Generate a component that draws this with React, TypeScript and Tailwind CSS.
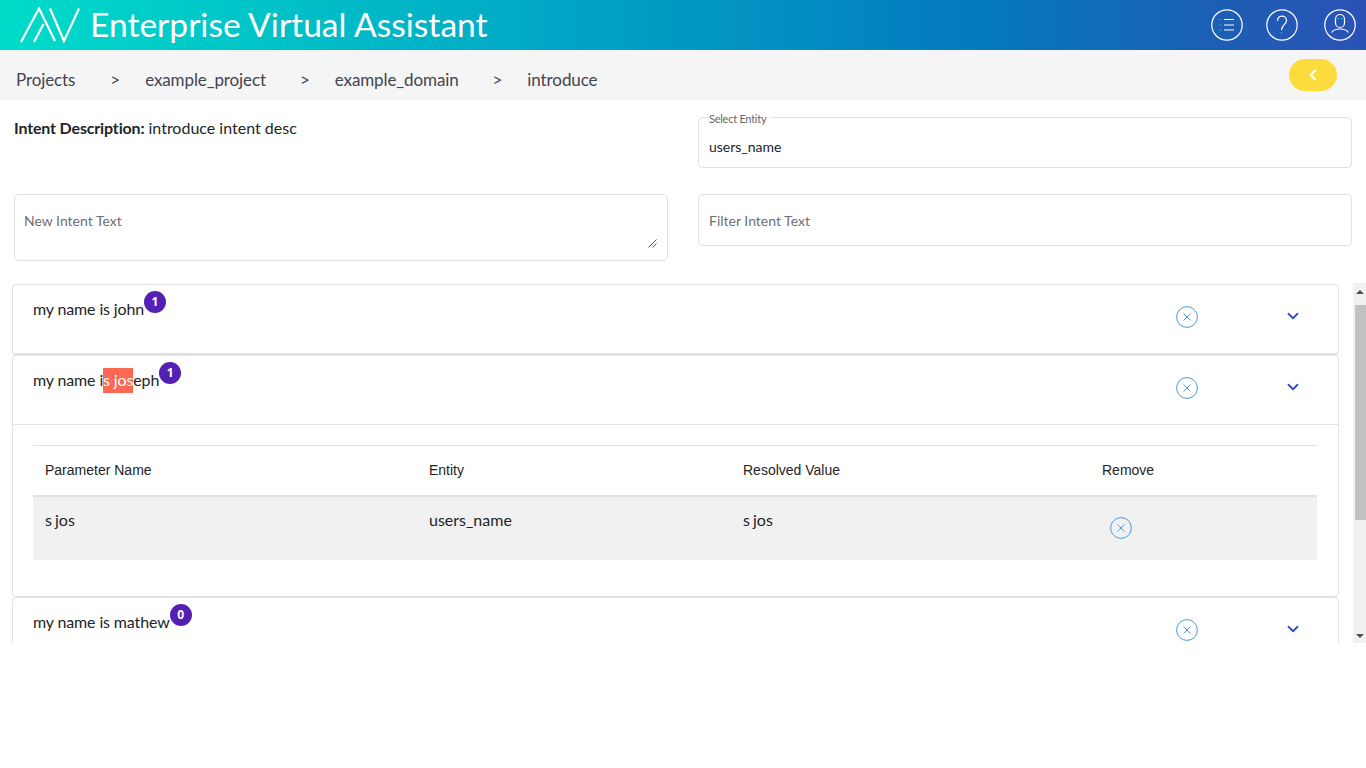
import { ChevronLeft, ChevronDown } from 'lucide-react';

// Logo mark, drawn from the header crop
function Logo() {
  return (
    <svg width="60" height="36" viewBox="0 0 60 36" fill="none" stroke="white" strokeWidth="2.2" className="shrink-0">
      <path d="M1 35 L19 1.5 L35 34" />
      <path d="M14 35 L23.5 17" />
      <path d="M30 1.5 L44 34 L59 1.5" />
    </svg>
  );
}

function CircleButton({ children }: { children: React.ReactNode }) {
  return (
    <svg width="32" height="32" viewBox="0 0 32 32" fill="none" stroke="white" strokeWidth="1.2">
      <circle cx="16" cy="16" r="15.2" />
      {children}
    </svg>
  );
}

function RemoveIcon() {
  return (
    <svg width="22" height="22" viewBox="0 0 22 22" fill="none" stroke="#4a9be0" strokeWidth="1">
      <circle cx="11" cy="11" r="10.4" />
      <path d="M7.5 7.5 L14.5 14.5 M14.5 7.5 L7.5 14.5" />
    </svg>
  );
}

function Badge({ value }: { value: number }) {
  return (
    <span className="-mt-[6px] flex h-[22px] w-[22px] items-center justify-center rounded-full bg-[#5420b4] text-xs font-bold tracking-normal text-white font-['Open_Sans',sans-serif]">
      {value}
    </span>
  );
}

function IntentHead({ children, badge }: { children: React.ReactNode; badge: number }) {
  return (
    <div className="flex h-[68px] shrink-0 pl-[20px]">
      <div className="mt-[12px] flex h-[25px] w-[1100px] items-start text-[16px] leading-[23px] tracking-[-0.14px] text-[#212529]">
        {children}
        <Badge value={badge} />
      </div>
      <div className="mt-[21px] ml-[43px]">
        <RemoveIcon />
      </div>
      <div className="mt-[22px] ml-[86px] text-[#2f4fc0]">
        <ChevronDown size={18} strokeWidth={2.4} />
      </div>
    </div>
  );
}

export default function App() {
  return (
    <div className="min-h-[768px] bg-white font-['Lato',sans-serif]">
      <header className="flex h-[50px] items-center bg-[linear-gradient(90deg,#00dcca_0%,#00acc6_36.6%,#0478bf_72.5%,#1b60b4_88%,#2b52b6_100%)] pl-[20px] pr-[10px]">
        <Logo />
        <h1 className="ml-[10px] text-[33.6px] leading-none text-white">Enterprise Virtual Assistant</h1>
        <div className="ml-auto flex items-center gap-[23px]">
          <CircleButton>
            <path d="M13 10.5 H23 M13 16 H23 M13 21 H23" />
            <path d="M8.5 10.5 H10.5 M8.5 16 H10.5 M8.5 21 H10.5" stroke="#00c4d0" />
          </CircleButton>
          <CircleButton>
            <path d="M11.5 12 C11.5 5.5 20.5 5.5 20.5 11.5 C20.5 15.5 15.5 16 15.5 21" />
            <path d="M15.5 23 V25" stroke="#00c4d0" />
          </CircleButton>
          <div className="ml-[3px]">
            <CircleButton>
              <rect x="11.5" y="5.5" width="9" height="13" rx="4.5" />
              <path d="M7.5 23.5 C10 20 13 20 16 20 C19 20 22 20 24.5 23.5" />
              <path d="M13 9.5 H15 M17 9.5 H19" stroke="#00c4d0" />
            </CircleButton>
          </div>
        </div>
      </header>

      <nav className="flex h-[50px] items-center bg-[#f5f5f5] pl-[16px] pr-[29px] pt-[10px] text-[17px] tracking-[-0.1px] text-[#444450]">
        <span>Projects</span>
        <span className="ml-[35px]">&gt;</span>
        <span className="ml-[25px]">example_project</span>
        <span className="ml-[34px]">&gt;</span>
        <span className="ml-[25px]">example_domain</span>
        <span className="ml-[34px]">&gt;</span>
        <span className="ml-[25px]">introduce</span>
        <button className="ml-auto -mt-[10px] flex h-[32px] w-[48px] items-center justify-center rounded-full bg-[#fbdc3c] text-white">
          <ChevronLeft size={18} strokeWidth={3} />
        </button>
      </nav>

      <section className="grid grid-cols-[654px_654px] gap-x-[30px] pl-[14px] pt-[16px]">
        <p className="text-[16px] leading-[24px] text-[#212529]">
          <b className="font-bold tracking-[-0.16px]">Intent Description:</b> introduce intent desc
        </p>
        <fieldset className="h-[57px] -mt-[5px] rounded-[5px] border border-[#e0e0e0] px-[10px]">
          <legend className="pr-[4px] text-[11px] leading-[12px] tracking-[-0.25px] text-[#666]">
            <span className="inline-block translate-y-[2px]">Select Entity</span>
          </legend>
          <div className="mt-[14px] text-[14px] leading-[20px] text-[#212529]">users_name</div>
        </fieldset>

        <div className="relative mt-[26px] h-[67px] rounded-[5px] border border-[#e0e0e0] pl-[9px] pt-[16px] text-[14px] leading-[20px] text-[#6f6f6f]">
          New Intent Text
          <svg width="9" height="9" viewBox="0 0 9 9" stroke="#555" className="absolute bottom-[12px] right-[10px]">
            <path d="M0.5 8.5 L8.5 0.5 M4.5 8.5 L8.5 4.5" />
          </svg>
        </div>
        <div className="mt-[26px] h-[52px] rounded-[5px] border border-[#e0e0e0] px-[10px] pt-[16px] text-[14px] leading-[20px] text-[#6f6f6f]">
          Filter Intent Text
        </div>
      </section>

      <section className="mt-[22px] flex h-[360px] overflow-hidden pl-[12px]">
        <div className="w-[1327px] shrink-0 pt-[1px]">
          <article className="h-[71px] rounded-[4px] border border-b-2 border-[#e2e2e2]">
            <IntentHead badge={1}>my name is john</IntentHead>
          </article>
          <article className="h-[242px] rounded-[4px] border border-[#e2e2e2]">
            <IntentHead badge={1}>
              my name i
              <span className="h-[25px] bg-[#ff6853] text-white">s jos</span>
              eph
            </IntentHead>
            <div className="border-t border-[#e2e2e2] pl-[20px] pr-[21px] pt-[20px]">
              <div className="grid h-[50px] grid-cols-[384px_314px_359px_1fr] items-center border-t border-[#e0e0e0] pl-[12px] text-[14px] text-[#212529] font-['Liberation_Sans',sans-serif]">
                <span>Parameter Name</span>
                <span>Entity</span>
                <span>Resolved Value</span>
                <span>Remove</span>
              </div>
              <div className="grid h-[65px] grid-cols-[384px_314px_359px_1fr] border-t-2 border-[#dee2e6] bg-[#f1f1f1] pl-[12px] pt-[11px] text-[16px] leading-[24px] [word-spacing:-1px] text-[#212529]">
                <span>s jos</span>
                <span>users_name</span>
                <span>s jos</span>
                <span className="ml-[8px] mt-[9px]">
                  <RemoveIcon />
                </span>
              </div>
            </div>
          </article>
          <article className="h-[70px] rounded-[4px] border border-[#e2e2e2]">
            <IntentHead badge={0}>my name is mathew</IntentHead>
          </article>
        </div>

        {/* scroll track */}
        <div className="relative ml-[14px] flex w-[13px] flex-col bg-[#f1f1f1]">
          <span className="mx-auto mt-[7px] h-0 w-0 border-x-[4px] border-b-[4px] border-x-transparent border-b-[#505050]" />
          <span className="ml-[2px] mt-[11px] h-[215px] bg-[#c1c1c1]" />
          <span className="mx-auto mt-auto mb-[5px] h-0 w-0 border-x-[4px] border-t-[4px] border-x-transparent border-t-[#505050]" />
        </div>
      </section>
    </div>
  );
}
